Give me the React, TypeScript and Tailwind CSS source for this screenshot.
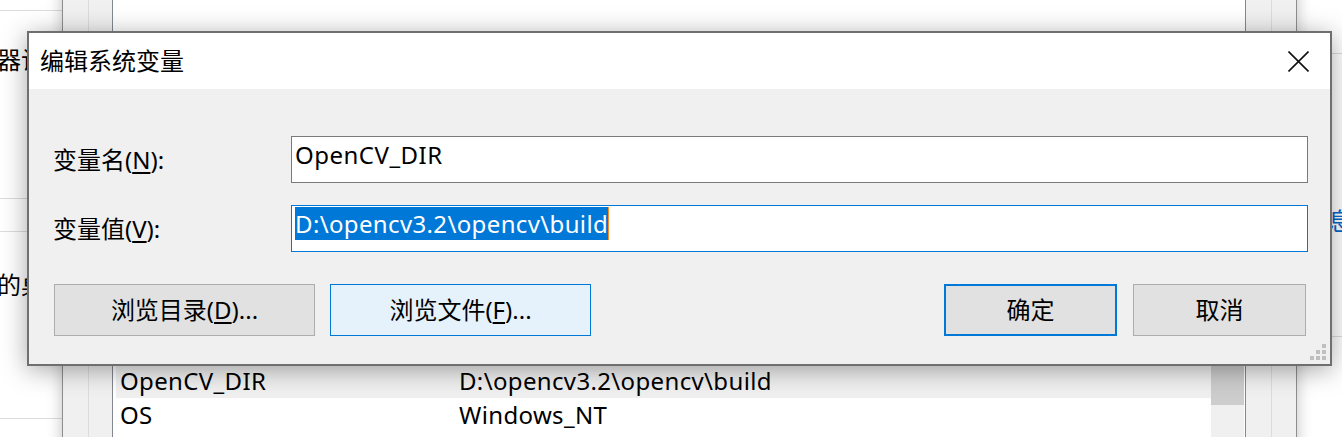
import React from "react";

const FONT = "font-['Noto_Sans','Noto_Sans_CJK_SC',sans-serif]";

function Row({ name, value, selected }: { name: string; value: string; selected?: boolean }) {
  return (
    <div className={`h-[34px] flex items-center pl-[4px] whitespace-nowrap tracking-[0.35px] ${selected ? "bg-[#f0f0f0]" : ""}`}>
      <div className="w-[339px]">{name}</div>
      <div>{value}</div>
    </div>
  );
}

function Btn({ children, kind, w, className = "" }: { children: React.ReactNode; kind?: "default" | "hover"; w: string; className?: string }) {
  const look =
    kind === "default"
      ? "border-2 border-[#0078d7] bg-[#e1e1e1]"
      : kind === "hover"
      ? "border border-[#0078d7] bg-[#e5f1fb]"
      : "border border-[#adadad] bg-[#e1e1e1]";
  return (
    <div className={`${w} h-full flex items-center justify-center whitespace-nowrap ${look} ${className}`}>
      {children}
    </div>
  );
}

export default function App() {
  return (
    <div className={`relative w-[1342px] h-[437px] overflow-hidden bg-white text-[24px] text-black ${FONT}`}>
      {/* System Properties window in the back */}
      <div className="absolute inset-0 bg-white">
        <div className="absolute left-0 top-[10px] w-[70px] h-px bg-[#dcdcdc]" />
        <div className="absolute left-0 top-[198px] w-[70px] h-px bg-[#dcdcdc]" />
        <div className="absolute left-0 top-[231px] w-[70px] h-px bg-[#dcdcdc]" />
        <div className="absolute left-0 top-[418px] w-[70px] h-px bg-[#dcdcdc]" />
        <span className="absolute left-[-51px] top-[44px] leading-[32px] whitespace-nowrap">处理器计划</span>
        <span className="absolute left-[-51px] top-[269px] leading-[32px] whitespace-nowrap">相关的桌面设置</span>
        <div className="absolute left-[1290px] top-[53px] w-[60px] h-px bg-[#dcdcdc]" />
        <div className="absolute left-[1290px] top-[336px] w-[60px] h-px bg-[#dcdcdc]" />
        <span className="absolute left-[1328px] top-[205px] leading-[32px] text-[#0066cc]">息</span>
      </div>

      {/* Environment Variables window */}
      <div className="absolute left-[62px] top-[-20px] w-[1235px] h-[480px] flex bg-[#f0f0f0] border-x border-[#8e8e8e] shadow-[0_0_14px_rgba(0,0,0,0.25)]">
        <div className="flex flex-1 ml-[25px] mr-[24px] pl-[23px] pr-[25px] border-x border-[#dcdcdc]">
          <div className="flex flex-1 bg-white border-x border-[#828790]">
            <div className="flex-1 flex flex-col pl-[3px] pt-[384px]">
              <Row name="OpenCV_DIR" value="D:\opencv3.2\opencv\build" selected />
              <Row name="OS" value="Windows_NT" />
            </div>
            <div className="w-[33px] mr-px flex flex-col">
              <div className="h-[100px] bg-white" />
              <div className="h-[325px] bg-[#cdcdcd]" />
              <div className="flex-1 bg-[#f0f0f0]" />
            </div>
          </div>
        </div>
      </div>

      {/* Edit System Variable dialog */}
      <div className="absolute left-[27px] top-[31px] w-[1305px] h-[335px] flex flex-col border-2 border-[#6f6f6f] bg-[#f0f0f0] shadow-[0_4px_24px_rgba(0,0,0,0.35)]">
        <div className="h-[56px] shrink-0 bg-white flex items-center justify-between">
          <span className="pl-[11px] whitespace-nowrap">编辑系统变量</span>
          <div className="w-[64px] h-full flex items-center justify-center">
            <svg width="21" height="21" viewBox="0 0 21 21">
              <path d="M0.5 0.5 L20.5 20.5 M20.5 0.5 L0.5 20.5" stroke="#111" strokeWidth="1.6" fill="none" />
            </svg>
          </div>
        </div>
        <div className="relative flex-1 flex flex-col pt-[47px] pl-[24px] pr-[22px]">
          <div className="h-[47px] flex items-center">
            <div className="w-[238px] whitespace-nowrap">
              变量名(<span className="underline underline-offset-[3px]">N</span>):
            </div>
            <div className="flex-1 h-full border border-[#7a7a7a] bg-white pl-[3px] pt-px leading-[33px] whitespace-nowrap tracking-[0.5px]">
              OpenCV_DIR
            </div>
          </div>
          <div className="mt-[22px] h-[47px] flex items-center">
            <div className="w-[238px] whitespace-nowrap">
              变量值(<span className="underline underline-offset-[3px]">V</span>):
            </div>
            <div className="flex-1 h-full border border-[#0078d7] bg-white pl-[3px] pt-px leading-[33px] whitespace-nowrap flex items-start">
              <span className="bg-[#0078d7] text-white tracking-[0.36px]">D:\opencv3.2\opencv\build</span>
              <span className="w-px h-[33px] bg-[#ff8a1f]" />
            </div>
          </div>
          <div className="mt-[32px] h-[52px] ml-px mr-[2px] flex">
            <Btn w="w-[261px]">
              浏览目录(<span className="underline underline-offset-[3px]">D</span>)...
            </Btn>
            <Btn w="w-[261px]" kind="hover" className="ml-[15px]">
              浏览文件(<span className="underline underline-offset-[3px]">F</span>)...
            </Btn>
            <div className="flex-1" />
            <Btn w="w-[173px]" kind="default">确定</Btn>
            <Btn w="w-[173px]" className="ml-[16px]">取消</Btn>
          </div>
          <svg className="absolute right-[4px] bottom-[4px]" width="16" height="16" viewBox="0 0 16 16">
            <rect x="12" y="0" width="4" height="4" fill="#bfbfbf" />
            <rect x="6" y="6" width="4" height="4" fill="#bfbfbf" />
            <rect x="12" y="6" width="4" height="4" fill="#bfbfbf" />
            <rect x="0" y="12" width="4" height="4" fill="#bfbfbf" />
            <rect x="6" y="12" width="4" height="4" fill="#bfbfbf" />
            <rect x="12" y="12" width="4" height="4" fill="#bfbfbf" />
          </svg>
        </div>
      </div>
    </div>
  );
}
